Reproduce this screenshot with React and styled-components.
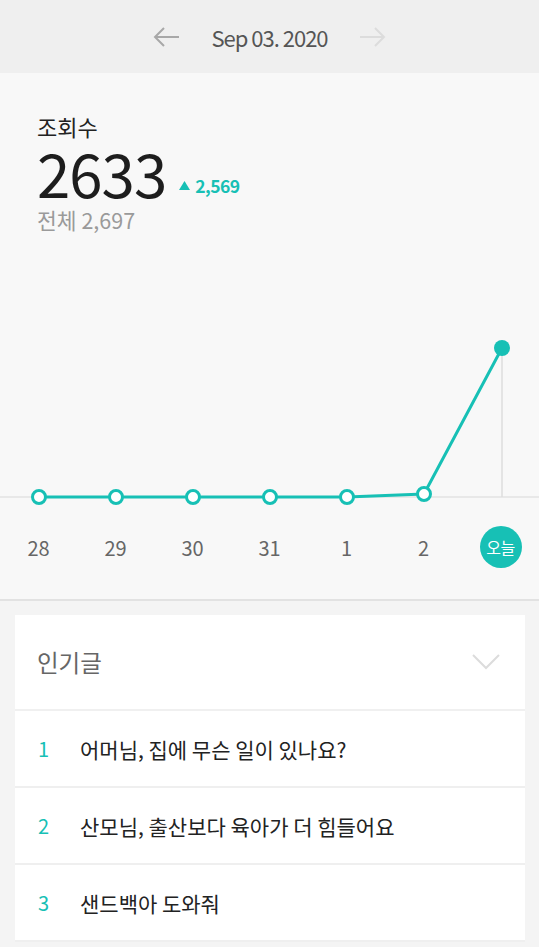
import React from "react";
import styled, { createGlobalStyle } from "styled-components";

const TEAL = "#17c0b5";

const GlobalStyle = createGlobalStyle`
  html, body {
    margin: 0;
    padding: 0;
    background: #f4f4f4;
  }
  body {
    font-family: "Noto Sans CJK KR", "Noto Sans", sans-serif;
    -webkit-font-smoothing: antialiased;
  }
`;

const Page = styled.div`
  width: 539px;
  min-height: 947px;
  background: #f4f4f4;
`;

const DateBar = styled.header`
  height: 73px;
  background: #efefef;
  display: flex;
  align-items: center;
  justify-content: center;
  gap: 31px;
`;

const ArrowButton = styled.button`
  border: none;
  background: none;
  padding: 0;
  display: flex;
  color: ${(p) => (p.disabled ? "#dcdcdc" : "#a8a8a8")};
`;

const DateText = styled.span`
  font-size: 22px;
  color: #555;
  letter-spacing: -1px;
  line-height: 1;
`;

const StatsPanel = styled.section`
  background: #f8f8f8;
  border-bottom: 2px solid #e2e2e2;
`;

const Summary = styled.div`
  padding: 38px 37px 0;
`;

const Title = styled.div`
  font-size: 22px;
  line-height: 30px;
  color: #222;
`;

const CountRow = styled.div`
  display: flex;
  align-items: baseline;
  gap: 13px;
  margin-top: 1px;
`;

const Count = styled.span`
  font-size: 60px;
  line-height: 60px;
  color: #1d1d1d;
  letter-spacing: -1px;
`;

const Delta = styled.span`
  display: flex;
  align-items: center;
  gap: 5px;
  font-size: 17.5px;
  font-weight: 700;
  color: ${TEAL};
  letter-spacing: -0.5px;
  transform: translateY(-8px);
`;

const Total = styled.div`
  font-size: 21.5px;
  line-height: 28px;
  color: #9a9a9a;
`;

const ChartSvg = styled.svg`
  display: block;
  width: 539px;
  height: 277px;
`;

const Axis = styled.div`
  display: grid;
  grid-template-columns: repeat(7, 77px);
  padding: 15px 0 31px;
  align-items: center;
`;

const AxisLabel = styled.div`
  display: flex;
  justify-content: center;
  align-items: center;
  height: 42px;
  font-size: 20px;
  color: #666;
`;

const TodayBadge = styled.div`
  width: 42px;
  height: 42px;
  border-radius: 50%;
  background: ${TEAL};
  color: #fff;
  font-size: 16px;
  display: flex;
  align-items: center;
  justify-content: center;
  letter-spacing: -0.5px;
`;

const Card = styled.section`
  margin: 14px 14px 0 15px;
  background: #fff;
`;

const CardHeader = styled.div`
  height: 94px;
  padding: 0 25px 0 22px;
  display: flex;
  align-items: center;
  justify-content: space-between;
  border-bottom: 2px solid #f0f0f0;
`;

const CardTitle = styled.span`
  font-size: 23.5px;
  color: #666;
`;

const Row = styled.div`
  height: 75px;
  display: flex;
  align-items: center;
  padding-left: 23px;
  border-bottom: 2px solid #efefef;
`;

const Rank = styled.span`
  width: 42px;
  font-size: 20px;
  color: ${TEAL};
`;

const RowText = styled.span`
  font-size: 21px;
  color: #222;
`;

const days = ["28", "29", "30", "31", "1", "2"];
const xs = [39, 116, 193, 270, 347, 424, 502];
const ys = [263, 263, 263, 263, 263, 260, 114];

const posts = [
  "어머님, 집에 무슨 일이 있나요?",
  "산모님, 출산보다 육아가 더 힘들어요",
  "샌드백아 도와줘",
];

function Chart() {
  const points = xs.map((x, i) => `${x},${ys[i]}`).join(" ");
  return (
    <ChartSvg viewBox="0 0 539 277">
      <line x1="0" y1="263" x2="539" y2="263" stroke="#e3e3e3" strokeWidth="1.5" />
      <line x1="502" y1="114" x2="502" y2="263" stroke="#dedede" strokeWidth="1.5" />
      <polyline points={points} fill="none" stroke={TEAL} strokeWidth="3" strokeLinejoin="round" />
      {xs.slice(0, 6).map((x, i) => (
        <circle key={x} cx={x} cy={ys[i]} r="6.5" fill="#fff" stroke={TEAL} strokeWidth="3" />
      ))}
      <circle cx="502" cy="114" r="8" fill={TEAL} />
    </ChartSvg>
  );
}

export default function App() {
  return (
    <Page>
      <GlobalStyle />
      <DateBar>
        <ArrowButton>
          <svg width="27" height="20" viewBox="0 0 27 20" fill="none" stroke="currentColor" strokeWidth="2">
            <path d="M26 10H2M11 1L2 10l9 9" />
          </svg>
        </ArrowButton>
        <DateText>Sep 03. 2020</DateText>
        <ArrowButton disabled>
          <svg width="27" height="20" viewBox="0 0 27 20" fill="none" stroke="currentColor" strokeWidth="2">
            <path d="M1 10h24M16 1l9 9-9 9" />
          </svg>
        </ArrowButton>
      </DateBar>

      <StatsPanel>
        <Summary>
          <Title>조회수</Title>
          <CountRow>
            <Count>2633</Count>
            <Delta>
              <svg width="11" height="9" viewBox="0 0 11 9">
                <path d="M5.5 0L11 9H0z" fill={TEAL} />
              </svg>
              2,569
            </Delta>
          </CountRow>
          <Total>전체 2,697</Total>
        </Summary>
        <Chart />
        <Axis>
          {days.map((d) => (
            <AxisLabel key={d}>{d}</AxisLabel>
          ))}
          <AxisLabel>
            <TodayBadge>오늘</TodayBadge>
          </AxisLabel>
        </Axis>
      </StatsPanel>

      <Card>
        <CardHeader>
          <CardTitle>인기글</CardTitle>
          <svg width="28" height="16" viewBox="0 0 28 16" fill="none" stroke="#dcdcdc" strokeWidth="2">
            <path d="M1 1l13 13L27 1" />
          </svg>
        </CardHeader>
        {posts.map((p, i) => (
          <Row key={p}>
            <Rank>{i + 1}</Rank>
            <RowText>{p}</RowText>
          </Row>
        ))}
      </Card>
    </Page>
  );
}
